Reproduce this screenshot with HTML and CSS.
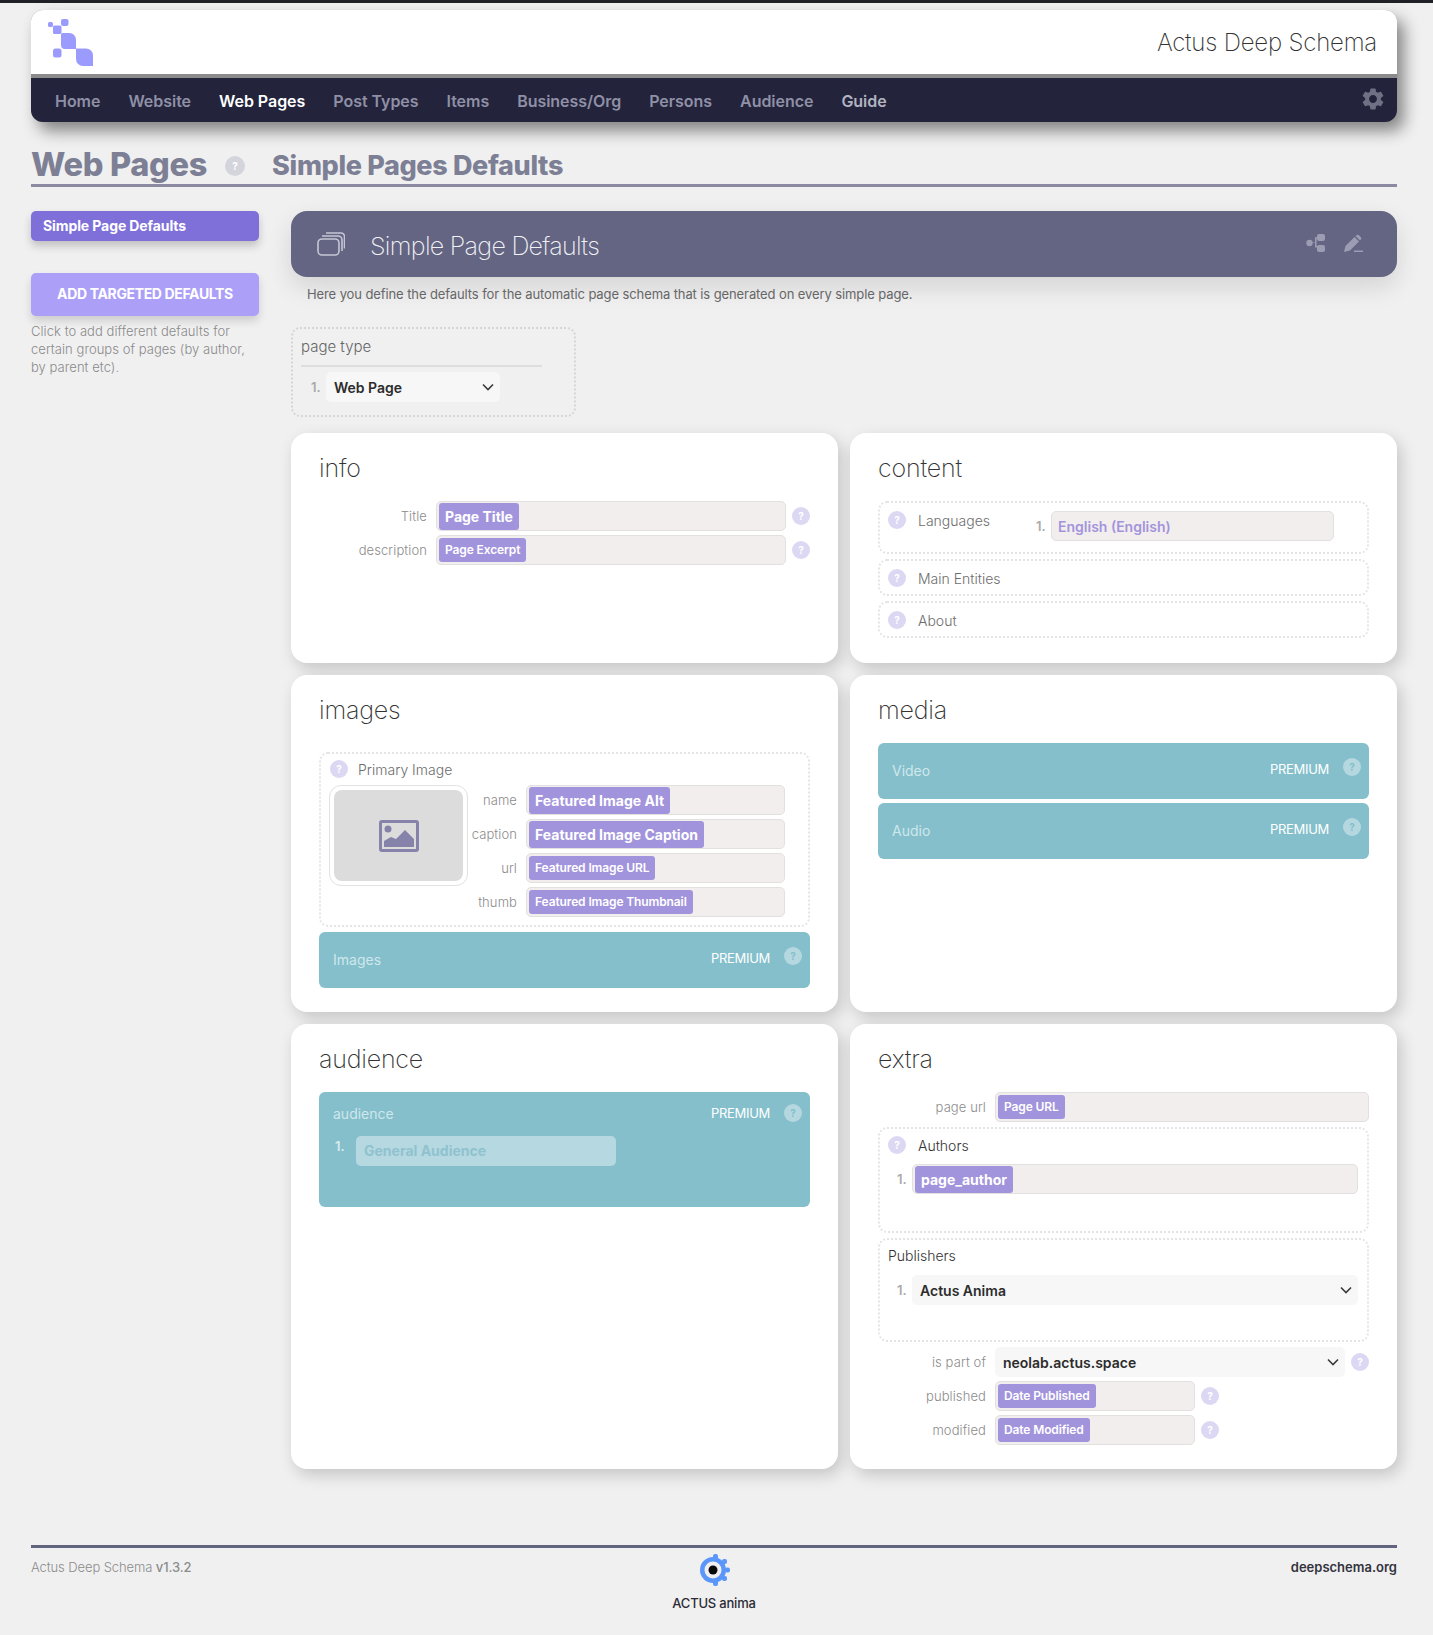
FILE: index.html
```html
<!DOCTYPE html>
<html lang="en">
<head>
  <meta charset="utf-8">
  <title>Actus Deep Schema</title>
  <link rel="stylesheet" href="styles.css">
</head>
<body>
  <div class="topline"></div>
  <div class="page">
    <div class="masthead">
      <div class="brand">
        <svg class="logo" viewBox="0 0 45 48" fill="#9b9bfd">
          <rect x="0" y="4" width="5" height="5" rx="1.500"/>
          <rect x="13" y="1" width="7.500" height="7" rx="2"/>
          <rect x="5" y="7.500" width="8.500" height="8.500" rx="1.500"/>
          <path d="M14.500 15h7a6.500 6.500 0 0 1 6.500 6.500V31H17a4 4 0 0 1-4-4V16.500a1.500 1.500 0 0 1 1.500-1.500z"/>
          <rect x="5" y="30.500" width="8.500" height="9" rx="2.500"/>
          <path d="M28 30.500h10a7 7 0 0 1 7 7V48H35a7 7 0 0 1-7-7z"/>
        </svg>
        <span class="brand-name">Actus Deep Schema</span>
      </div>
      <nav class="nav">
        <a href="#">Home</a>
        <a href="#">Website</a>
        <a href="#" class="active">Web Pages</a>
        <a href="#">Post Types</a>
        <a href="#">Items</a>
        <a href="#">Business/Org</a>
        <a href="#">Persons</a>
        <a href="#">Audience</a>
        <a href="#" class="guide">Guide</a>
        <svg class="gear" viewBox="2 2 20 20" fill="#6f7083"><path d="M19.14 12.94c.04-.3.06-.61.06-.94 0-.32-.02-.64-.07-.94l2.03-1.58c.18-.14.23-.41.12-.61l-1.92-3.32c-.12-.22-.37-.29-.59-.22l-2.39.96c-.5-.38-1.03-.7-1.62-.94l-.36-2.54c-.04-.24-.24-.41-.48-.41h-3.84c-.24 0-.43.17-.47.41l-.36 2.54c-.59.24-1.13.57-1.62.94l-2.39-.96c-.22-.08-.47 0-.59.22L2.74 8.87c-.12.21-.08.47.12.61l2.03 1.58c-.05.3-.09.63-.09.94s.02.64.07.94l-2.03 1.58c-.18.14-.23.41-.12.61l1.92 3.32c.12.22.37.29.59.22l2.39-.96c.5.38 1.03.7 1.62.94l.36 2.54c.05.24.24.41.48.41h3.84c.24 0 .44-.17.47-.41l.36-2.54c.59-.24 1.13-.56 1.62-.94l2.39.96c.22.08.47 0 .59-.22l1.92-3.32c.12-.22.07-.47-.12-.61l-2.01-1.58zM12 15.6c-1.98 0-3.6-1.62-3.6-3.6s1.62-3.6 3.6-3.6 3.6 1.62 3.6 3.6-1.62 3.6-3.6 3.6z"/></svg>
      </nav>
    </div>

    <div class="title-row">
      <h1>Web Pages</h1>
      <span class="help help-grey">?</span>
      <span class="subtitle">Simple Pages Defaults</span>
    </div>

    <div class="layout">
      <aside class="sidebar">
        <a href="#" class="side-current">Simple Page Defaults</a>
        <a href="#" class="side-add">ADD TARGETED DEFAULTS</a>
        <p class="side-note">Click to add different defaults for certain groups of pages (by author, by parent etc).</p>
      </aside>

      <main class="main">
        <div class="banner">
          <svg class="banner-stack" viewBox="0 0 28 24" fill="none" stroke="#c6c7d6" stroke-width="1.6">
            <rect x="1" y="7" width="21" height="16" rx="4"/>
            <path d="M5 4h16a4 4 0 0 1 4 4v11"/>
            <path d="M9 1h15a3.500 3.500 0 0 1 3.500 3.500v12"/>
          </svg>
          <span class="banner-title">Simple Page Defaults</span>
          <svg class="banner-icon" viewBox="0 0 20 18" fill="#9c9db3">
            <circle cx="3.500" cy="9" r="3.200"/>
            <path d="M5 8.200h4v-5h3v1.600h-1.400v7.200h1.400v1.600h-3v-4.800h-4z"/>
            <rect x="11" y="0" width="8" height="7" rx="2"/>
            <rect x="11" y="11" width="8" height="7" rx="2"/>
          </svg>
          <svg class="banner-icon pen" viewBox="0 0 20 18" fill="#9c9db3">
            <path d="M0 18l1.500-6L10.500 3l4.500 4.500L6 16.500z"/>
            <path d="M12 1.500a2.200 2.200 0 0 1 3-.2l1.700 1.700a2.200 2.200 0 0 1-.2 3L16 6.500 11.500 2z"/>
            <rect x="10" y="16.500" width="9" height="1.500"/>
          </svg>
        </div>
        <p class="banner-note">Here you define the defaults for the automatic page schema that is generated on every simple page.</p>

        <div class="group page-type">
          <div class="page-type-label">page type</div>
          <div class="list-row">
            <span class="num">1.</span>
            <div class="select select-small">Web Page<svg class="chevron" viewBox="0 0 12 8"><path d="M1 1.500l5 5 5-5"/></svg></div>
          </div>
        </div>

        <div class="cards">
          <section class="card">
            <h2>info</h2>
            <div class="rows">
              <div class="row">
                <label>Title</label>
                <div class="field"><span class="chip chip-lg">Page Title</span></div>
                <span class="help">?</span>
              </div>
              <div class="row">
                <label>description</label>
                <div class="field"><span class="chip">Page Excerpt</span></div>
                <span class="help">?</span>
              </div>
            </div>
          </section>

          <section class="card">
            <h2>content</h2>
            <div class="stack">
              <div class="group group-languages">
                <div class="group-head"><span class="help">?</span><span>Languages</span></div>
                <div class="list-row">
                  <span class="num">1.</span>
                  <div class="field field-lang">English (English)</div>
                </div>
              </div>
              <div class="group group-line">
                <div class="group-head"><span class="help">?</span><span>Main Entities</span></div>
              </div>
              <div class="group group-line">
                <div class="group-head"><span class="help">?</span><span>About</span></div>
              </div>
            </div>
          </section>

          <section class="card">
            <h2>images</h2>
            <div class="group group-primary">
              <div class="group-head"><span class="help">?</span><span>Primary Image</span></div>
              <div class="primary-body">
                <div class="thumb">
                  <div class="thumb-inner">
                    <svg class="thumb-icon" viewBox="0 0 40 32">
                      <rect x="1.500" y="1.500" width="37" height="29" rx="1.500" fill="none" stroke="#8583a9" stroke-width="3"/>
                      <circle cx="9" cy="9" r="3.500" fill="#8583a9"/>
                      <path d="M5 27v-6l7-4 5 2 9-9 9 9v8z" fill="#8583a9"/>
                    </svg>
                  </div>
                </div>
                <div class="rows primary-rows">
                  <div class="row"><label>name</label><div class="field"><span class="chip chip-lg">Featured Image Alt</span></div></div>
                  <div class="row"><label>caption</label><div class="field"><span class="chip chip-lg">Featured Image Caption</span></div></div>
                  <div class="row"><label>url</label><div class="field"><span class="chip">Featured Image URL</span></div></div>
                  <div class="row"><label>thumb</label><div class="field"><span class="chip">Featured Image Thumbnail</span></div></div>
                </div>
              </div>
            </div>
            <div class="premium premium-images">
              <span class="premium-name">Images</span>
              <span class="premium-tag">PREMIUM</span>
              <span class="help help-teal">?</span>
            </div>
          </section>

          <section class="card">
            <h2>media</h2>
            <div class="premium">
              <span class="premium-name">Video</span>
              <span class="premium-tag">PREMIUM</span>
              <span class="help help-teal">?</span>
            </div>
            <div class="premium premium-next">
              <span class="premium-name">Audio</span>
              <span class="premium-tag">PREMIUM</span>
              <span class="help help-teal">?</span>
            </div>
          </section>

          <section class="card">
            <h2>audience</h2>
            <div class="premium-box">
              <div class="premium-box-head">
                <span class="premium-name">audience</span>
                <span class="premium-tag">PREMIUM</span>
                <span class="help help-teal">?</span>
              </div>
              <div class="premium-item">
                <span class="num num-light">1.</span>
                <div class="field-disabled">General Audience</div>
              </div>
            </div>
          </section>

          <section class="card">
            <h2>extra</h2>
            <div class="rows">
              <div class="row">
                <label>page url</label>
                <div class="field"><span class="chip">Page URL</span></div>
              </div>
            </div>
            <div class="group group-authors">
              <div class="group-head group-head-dark"><span class="help">?</span><span>Authors</span></div>
              <div class="list-row">
                <span class="num">1.</span>
                <div class="field"><span class="chip chip-lg">page_author</span></div>
              </div>
            </div>
            <div class="group group-publishers">
              <div class="group-title">Publishers</div>
              <div class="list-row">
                <span class="num">1.</span>
                <div class="select">Actus Anima<svg class="chevron" viewBox="0 0 12 8"><path d="M1 1.500l5 5 5-5"/></svg></div>
              </div>
            </div>
            <div class="rows rows-after">
              <div class="row">
                <label>is part of</label>
                <div class="select">neolab.actus.space<svg class="chevron" viewBox="0 0 12 8"><path d="M1 1.500l5 5 5-5"/></svg></div>
                <span class="help">?</span>
              </div>
              <div class="row">
                <label>published</label>
                <div class="field field-short"><span class="chip">Date Published</span></div>
                <span class="help">?</span>
              </div>
              <div class="row">
                <label>modified</label>
                <div class="field field-short"><span class="chip">Date Modified</span></div>
                <span class="help">?</span>
              </div>
            </div>
          </section>
        </div>
      </main>
    </div>

    <footer class="footer">
      <div class="footer-version">Actus Deep Schema <b>v1.3.2</b></div>
      <div class="footer-brand">
        <svg class="footer-logo" viewBox="0 0 32 32">
          <g fill="#5b96fb">
            <circle cx="15" cy="16" r="13"/>
            <rect x="15" y="0" width="5" height="6" rx="2"/>
            <rect x="24" y="5" width="5" height="5" rx="2"/>
            <rect x="27" y="13.500" width="5" height="5" rx="2"/>
            <rect x="24" y="22" width="5" height="5" rx="2"/>
            <rect x="15" y="26" width="5" height="6" rx="2"/>
          </g>
          <circle cx="15" cy="16" r="8.500" fill="#f0f0f1"/>
          <circle cx="15" cy="16" r="4.500" fill="#0a0a0a"/>
        </svg>
        <span>ACTUS anima</span>
      </div>
      <div class="footer-site">deepschema.org</div>
    </footer>
  </div>
</body>
</html>
```

FILE: styles.css
```css
* {
  box-sizing: border-box;
}

body {
  margin: 0;
  background-color: #f0f0f1;
  font-family: Inter, "Noto Sans", sans-serif;
  color: #333;
}

a {
  text-decoration: none;
}

.topline {
  height: 3px;
  background-color: #1f2126;
}

.page {
  padding: 7px 36px 0 31px;
}

/* header */
.masthead {
  background-color: #8b8b8b;
  border-radius: 12px;
  box-shadow: 7px 9px 16px rgba(0, 0, 0, 0.45);
}

.brand {
  height: 64px;
  background: white;
  border-radius: 12px 12px 0 0;
  display: flex;
  align-items: flex-start;
  justify-content: space-between;
  padding: 8px 20px 0 17px;
}

.logo {
  width: 45px;
  height: 48px;
}

.brand-name {
  font-size: 24px;
  font-weight: 200;
  letter-spacing: -0.2px;
  line-height: 50px;
  color: #333;
}

.nav {
  height: 44px;
  margin-top: 4px;
  background-color: #23233c;
  border-radius: 0 0 12px 12px;
  display: flex;
  align-items: center;
  gap: 28px;
  padding: 0 13px 0 24px;
}

.nav a {
  font-size: 16px;
  font-weight: 600;
  letter-spacing: -0.04px;
  color: #8f90a5;
  padding-top: 2px;
}

.nav a.active {
  color: white;
}

.nav a.guide {
  color: #b2b3c0;
}

.gear {
  width: 22px;
  height: 22px;
  margin-left: auto;
  margin-top: -3px;
}

/* page title */
.title-row {
  height: 65px;
  border-bottom: 3px solid #8a8aa3;
  display: flex;
  align-items: flex-end;
  color: #7d7f95;
}

h1 {
  margin: 0;
  font-size: 32.5px;
  font-weight: 800;
  line-height: 38px;
  letter-spacing: -0.3px;
}

.subtitle {
  margin-left: 27px;
  font-size: 27px;
  font-weight: 800;
  line-height: 36px;
  letter-spacing: -0.35px;
}

/* help dots */
.help {
  flex: none;
  width: 18px;
  height: 18px;
  border-radius: 50%;
  background-color: #dcd8f4;
  color: white;
  font-size: 10px;
  font-weight: 700;
  line-height: 18px;
  text-align: center;
}

.help-grey {
  width: 20px;
  height: 20px;
  margin-left: 18px;
  margin-bottom: 8px;
  background-color: #d4d5dc;
  line-height: 20px;
}

.help-teal {
  background-color: #b5d8e0;
  color: #84bfcb;
}

/* two columns */
.layout {
  display: flex;
  gap: 32px;
  padding-top: 24px;
}

.sidebar {
  flex: none;
  width: 228px;
}

.side-current {
  display: block;
  height: 30px;
  padding-left: 12px;
  background-color: #7e6fd9;
  border-radius: 5px;
  color: white;
  font-size: 14px;
  font-weight: 700;
  letter-spacing: -0.1px;
  line-height: 30px;
  box-shadow: 0 5px 8px rgba(0, 0, 0, 0.2);
}

.side-add {
  display: block;
  height: 43px;
  margin-top: 32px;
  background-color: #ac9ff7;
  border-radius: 5px;
  color: white;
  font-size: 14px;
  font-weight: 700;
  letter-spacing: -0.35px;
  line-height: 41px;
  text-align: center;
  box-shadow: 0 5px 8px rgba(0, 0, 0, 0.15);
}

.side-note {
  margin: 6px 0 0;
  width: 215px;
  font-size: 13px;
  font-weight: 300;
  letter-spacing: 0.05px;
  line-height: 18px;
  color: #8a8a8a;
}

.main {
  flex: 1;
  min-width: 0;
}

.banner {
  height: 66px;
  background-color: #636582;
  border-radius: 16px;
  display: flex;
  align-items: center;
  padding: 0 36px 0 26px;
  box-shadow: 0 10px 24px rgba(0, 0, 0, 0.12);
}

.banner-stack {
  width: 28px;
  height: 24px;
}

.banner-title {
  flex: 1;
  margin-left: 25px;
  padding-top: 3px;
  font-size: 25px;
  font-weight: 200;
  letter-spacing: -0.7px;
  color: #f2f2f6;
}

.banner-icon {
  width: 20px;
  height: 18px;
  margin-top: -2px;
}

.banner-icon.pen {
  margin-left: 18px;
  margin-right: -3px;
}

.banner-note {
  margin: 9px 0 25px 16px;
  font-size: 13px;
  line-height: 16px;
  letter-spacing: -0.1px;
  color: #666;
}

/* dotted groups */
.group {
  border: 2px dotted #e4e4e6;
  border-radius: 9px;
}

.page-type {
  width: 285px;
  height: 90px;
  padding: 7px 8px;
  border-color: #d6d6d8;
}

.page-type-label {
  width: 241px;
  height: 31px;
  border-bottom: 2px solid #dedee0;
  font-size: 15px;
  font-weight: 300;
  line-height: 22px;
  color: #666;
}

.page-type .list-row {
  margin-top: 5px;
  padding-left: 10px;
}

.list-row {
  display: flex;
  align-items: center;
}

.num {
  flex: none;
  width: 15px;
  font-size: 13px;
  font-weight: 600;
  color: #aaa;
}

.num-light {
  color: #d7ecf1;
}

.select {
  flex: 1;
  height: 30px;
  background-color: #f7f7f7;
  border-radius: 5px;
  display: flex;
  align-items: center;
  justify-content: space-between;
  padding: 0 6px 0 8px;
  font-size: 14px;
  font-weight: 600;
  color: #2c2c2c;
}

.select-small {
  flex: none;
  width: 174px;
}

.chevron {
  width: 12px;
  height: 8px;
  fill: none;
  stroke: #3a3a3a;
  stroke-width: 1.6;
}

/* cards */
.cards {
  display: grid;
  grid-template-columns: 1fr 1fr;
  grid-template-rows: 230px 337px 445px;
  gap: 12px;
  margin-top: 16px;
}

.card {
  background: white;
  border-radius: 16px;
  padding: 20px 28px 0;
  box-shadow: 4px 6px 16px rgba(0, 0, 0, 0.18);
}

h2 {
  margin: 0 0 18px;
  font-size: 25px;
  font-weight: 200;
  line-height: 30px;
  letter-spacing: -0.2px;
  color: #333;
}

.rows {
  display: flex;
  flex-direction: column;
  gap: 4px;
}

.row {
  display: flex;
  align-items: center;
  height: 30px;
}

.row label {
  flex: none;
  width: 108px;
  margin-right: 9px;
  font-size: 13px;
  font-weight: 300;
  letter-spacing: 0.1px;
  text-align: right;
  color: #8c8c8c;
}

.row .help {
  margin-left: 6px;
}

.field {
  flex: 1;
  height: 30px;
  background-color: #f3eeee;
  border: 1px solid #e3e0e0;
  border-radius: 5px;
  display: flex;
  align-items: center;
  padding: 0 2px;
}

.field-short {
  flex: none;
  width: 200px;
}

.chip {
  display: block;
  height: 24px;
  padding: 0 6px;
  background-color: #a294dc;
  border-radius: 3px;
  color: white;
  font-size: 12px;
  font-weight: 600;
  letter-spacing: -0.12px;
  line-height: 24px;
  white-space: nowrap;
}

.chip-lg {
  height: 27px;
  font-size: 14px;
  font-weight: 700;
  letter-spacing: 0;
  line-height: 27px;
}

.stack {
  display: flex;
  flex-direction: column;
  gap: 5px;
}

.group-head {
  display: flex;
  align-items: center;
  gap: 12px;
  font-size: 14px;
  font-weight: 300;
  color: #6d6d6d;
}

.group-languages {
  height: 53px;
  display: flex;
  justify-content: space-between;
  align-items: flex-start;
  padding: 8px 33px 0 8px;
}

.field-lang {
  flex: none;
  width: 283px;
  padding-left: 6px;
  color: #a294dc;
  font-size: 14px;
  font-weight: 600;
}

.group-line {
  height: 37px;
  padding: 8px 8px 0;
}

/* h2 margin collapses with this one, so it is the full gap */
.group-primary {
  height: 175px;
  margin-top: 27px;
  padding: 6px 23px 0 8px;
}

.group-primary .group-head {
  gap: 10px;
  margin-left: 1px;
}

.primary-body {
  display: flex;
  margin-top: 7px;
}

.thumb {
  flex: none;
  width: 139px;
  height: 101px;
  padding: 4px;
  border: 1px solid #e2e2e2;
  border-radius: 12px;
}

.thumb-inner {
  height: 100%;
  background-color: #dcdcdc;
  border-radius: 8px;
  display: flex;
  align-items: center;
  justify-content: center;
}

.thumb-icon {
  width: 40px;
  height: 32px;
}

.primary-rows {
  flex: 1;
  min-width: 0;
}

.primary-rows .row label {
  width: 49px;
}

/* premium bars */
.premium {
  height: 56px;
  background-color: #84bfcb;
  border-radius: 6px;
  display: flex;
  align-items: flex-start;
  padding: 15px 8px 0 14px;
}

.premium-next {
  margin-top: 4px;
}

.premium-images {
  margin-top: 5px;
}

.premium-name {
  flex: 1;
  padding-top: 4px;
  font-size: 14px;
  font-weight: 400;
  color: #cfe7ec;
}

.premium-tag {
  padding-top: 3px;
  margin-right: 14px;
  font-size: 13px;
  font-weight: 400;
  letter-spacing: -0.3px;
  color: white;
}

.premium-box {
  height: 115px;
  background-color: #84bfcb;
  border-radius: 6px;
  padding: 12px 8px 0 14px;
}

.premium-box-head {
  display: flex;
  align-items: flex-start;
}

.premium-box-head .premium-name,
.premium-box-head .premium-tag {
  padding-top: 1px;
}

.premium-item {
  display: flex;
  align-items: flex-start;
  margin-top: 14px;
}

.premium-item .num {
  width: 21px;
  margin-left: 2px;
  line-height: 20px;
}

.field-disabled {
  width: 260px;
  height: 30px;
  padding-left: 8px;
  background-color: #b6d8e0;
  border-radius: 5px;
  color: #8fc2cf;
  font-size: 14px;
  font-weight: 700;
  line-height: 30px;
}

.group-authors {
  height: 106px;
  margin-top: 5px;
  padding: 7px 9px 0 8px;
}

.group-head-dark {
  color: #333;
}

.group-authors .list-row,
.group-publishers .list-row {
  padding-left: 9px;
}

.group-authors .list-row {
  margin-top: 10px;
}

.group-publishers {
  height: 104px;
  margin-top: 5px;
  padding: 7px 9px 0 8px;
}

.group-title {
  height: 28px;
  font-size: 14px;
  font-weight: 300;
  line-height: 18px;
  color: #333;
}

.rows-after {
  margin-top: 5px;
}

/* footer */
.footer {
  display: flex;
  justify-content: space-between;
  margin-top: 76px;
  height: 90px;
  border-top: 3px solid #62647f;
  padding-top: 11px;
  font-size: 13px;
}

.footer-version {
  flex: 1;
  font-weight: 300;
  line-height: 17px;
  letter-spacing: -0.1px;
  color: #8c8c8c;
}

.footer-version b {
  font-weight: 500;
}

.footer-brand {
  display: flex;
  flex-direction: column;
  align-items: center;
  gap: 9px;
  font-weight: 500;
  letter-spacing: -0.2px;
  color: #2b2b35;
}

.footer-logo {
  width: 32px;
  height: 32px;
  margin-top: -5px;
}

.footer-site {
  flex: 1;
  text-align: right;
  font-weight: 600;
  line-height: 17px;
  color: #33333d;
}
```
